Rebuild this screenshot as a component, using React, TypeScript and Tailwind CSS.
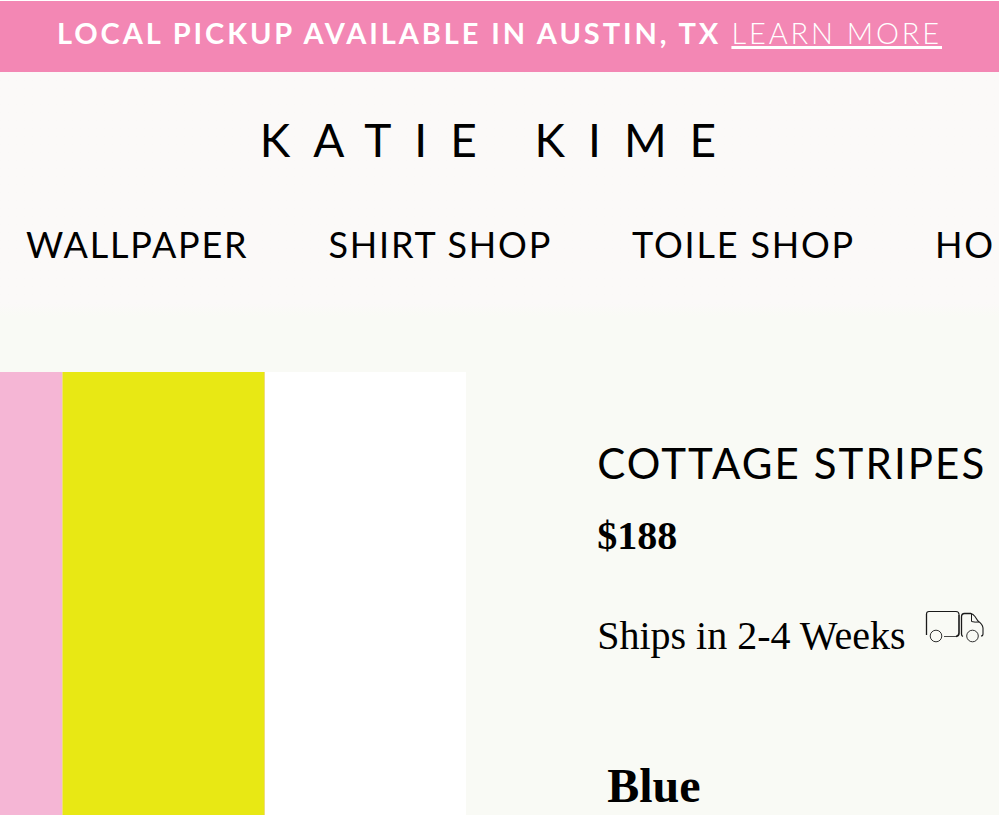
import React from "react";

const navLinks = [
  { label: "WALLPAPER", href: "#wallpaper" },
  { label: "SHIRT SHOP", href: "#shirt-shop" },
  { label: "TOILE SHOP", href: "#toile-shop" },
  { label: "HO", href: "#ho" },
];

function TruckIcon() {
  return (
    <svg
      viewBox="0 0 60 34"
      className="mt-1 h-[34px] w-[60px] shrink-0"
      fill="none"
      stroke="#1a1a1a"
      aria-hidden="true"
    >
      <path d="M1.5 25V4" strokeWidth="1.3" />
      <path d="M1.5 4Q1.5 1.5 4 1.5H31Q34 1.5 34 4.5" strokeWidth="1.1" />
      <path d="M34 4.5V23Q34 26 31 26.5" strokeWidth="1.6" />
      <path d="M31 26.5H19" strokeWidth="0.8" />
      <path d="M38 26.5Q36.5 26 36.5 24V7Q36.5 3.5 39.5 3.5H46" strokeWidth="1.3" />
      <path d="M46 3.5Q48 4 50 6.5L53 11Q57.5 14 58 18V24Q58 26 56 26" strokeWidth="1.1" />
      <path d="M46.5 3.5V11.5Q50 12.5 54 12" strokeWidth="1" />
      <circle cx="11" cy="26" r="5.8" strokeWidth="0.9" />
      <circle cx="47.5" cy="26" r="5.8" strokeWidth="0.9" />
    </svg>
  );
}

function AnnouncementBar() {
  return (
    <div className="border-t border-white bg-[#f387b4] px-4 pt-3 pb-5 text-center text-[29px] leading-[39px] tracking-widest whitespace-nowrap text-white">
      <strong className="font-bold">
        LOCAL PICKUP AVAILABLE IN AUSTIN, TX
      </strong>{" "}
      <a
        href="#pickup"
        className="font-light underline decoration-[3px] underline-offset-2"
      >
        LEARN MORE
      </a>
    </div>
  );
}

function Header() {
  return (
    <header className="bg-linear-to-b from-[#fbf9f8] from-95% to-[#f9faf5] pt-9 pb-12">
      <div className="text-center">
        <a href="#top" className="text-[46px] leading-[64px] tracking-[0.5em]">
          KATIE KIME
        </a>
      </div>
      <nav className="mt-12 flex gap-20 overflow-hidden pl-[26px] text-4xl leading-[48px] tracking-wider whitespace-nowrap">
        {navLinks.map((link) => (
          <a key={link.label} href={link.href}>
            {link.label}
          </a>
        ))}
      </nav>
    </header>
  );
}

export default function App() {
  return (
    <div
      id="top"
      className="flex h-screen flex-col overflow-hidden bg-[#f9faf5] font-['Lato',sans-serif] text-black"
    >
      <AnnouncementBar />
      <Header />

      <main className="mt-14 flex min-h-0 flex-1">
        {/* striped wallpaper swatch */}
        <div className="flex w-7/15 shrink-0">
          <div className="w-[62px] bg-[#f5b6d5]" />
          <div className="flex-1 border-x border-[#efdc7c] bg-[#e8e814]" />
          <div className="flex-1 bg-white" />
        </div>

        <section className="ml-[131px] pt-16 font-['Liberation_Serif',serif] whitespace-nowrap">
          <h1 className="font-['Lato',sans-serif] text-[42px] leading-[54px] tracking-wider">
            COTTAGE STRIPES
          </h1>
          <p className="mt-4 text-[40px] leading-[60px] font-bold">$188</p>
          <div className="mt-10 flex items-start gap-5">
            <p className="text-[40px] leading-[60px]">Ships in 2-4 Weeks</p>
            <TruckIcon />
          </div>
          <h2 className="mt-[90px] pl-[10px] text-5xl leading-[60px] font-bold">
            Blue
          </h2>
        </section>
      </main>
    </div>
  );
}
